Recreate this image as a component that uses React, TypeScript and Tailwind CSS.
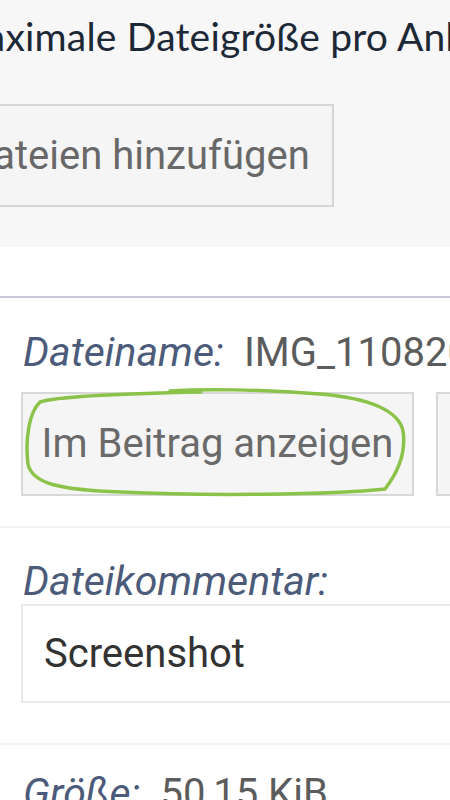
import React from "react";

function Scribble() {
  // hand-drawn green ring around the first action button
  return (
    <svg
      className="absolute left-0 top-0 pointer-events-none overflow-visible"
      width="393"
      height="104"
      viewBox="0 0 393 104"
      fill="none"
    >
      <path
        d="M 180 0 C 130 1, 40 3, 19 10 C 8 20, 4 48, 7 72 C 11 92, 40 98, 100 100 C 180 104, 310 103, 364 97 C 378 79, 385 59, 382 39 C 378 19, 349 6, 299 2 C 239 -3, 179 -3, 149 -1"
        stroke="#8bc34a"
        strokeWidth="3.5"
        strokeLinecap="round"
        strokeLinejoin="round"
      />
    </svg>
  );
}

export default function App() {
  return (
    <div className="w-[450px] h-[800px] overflow-hidden bg-white font-['Roboto',sans-serif]">
      {/* upload area */}
      <section className="h-[247px] bg-[#f7f7f7] pt-[12px] overflow-hidden">
        <p className="ml-[-50px] whitespace-nowrap font-['Lato',sans-serif] text-[39px] leading-[48px] tracking-[0.2px] text-[#1d2837]">
          Maximale Dateigröße pro Anhang: 2 MB
        </p>
        <button className="mt-[44px] ml-[-57px] h-[103px] border-2 border-[#d5d5d5] bg-[#f5f5f5] px-[22px] text-[40px] text-[#686868] whitespace-nowrap">
          Dateien hinzufügen
        </button>
      </section>

      <div className="h-[49px]" />
      <div className="h-[2px] bg-[#c8c8d6]" />

      {/* attachment entry */}
      <div className="pl-[21px] pt-[32px] pb-[30px] overflow-hidden">
        <div className="flex items-baseline whitespace-nowrap leading-[44px] pl-[2px]">
          <span className="italic text-[41px] text-[#4b5b79]">Dateiname:</span>
          <span className="ml-[20px] text-[40px] text-[#5c5c5c]">IMG_1108202412345.png</span>
        </div>
        <div className="mt-[17px] flex gap-[22px]">
          <div className="relative shrink-0">
            <button className="w-[393px] h-[104px] border-2 border-[#d8d8d8] bg-[#f5f5f5] text-[40px] text-[#6a6a6a] whitespace-nowrap">
              Im Beitrag anzeigen
            </button>
            <Scribble />
          </div>
          <button className="shrink-0 w-[260px] h-[104px] border-2 border-[#d8d8d8] bg-[#f5f5f5] text-[40px] text-[#6a6a6a] whitespace-nowrap">
            Löschen
          </button>
        </div>
      </div>

      <div className="h-[2px] bg-[#f3f3f3]" />

      <div className="pl-[21px] pt-[31px] pb-[40px] overflow-hidden">
        <div className="italic text-[41px] leading-[44px] text-[#4b5b79] pl-[2px]">Dateikommentar:</div>
        <div className="mt-[1px] w-[600px] h-[99px] border-2 border-[#e9e9e9] bg-white flex items-center pl-[21px] text-[40px] text-[#333333]">
          Screenshot
        </div>
      </div>

      <div className="h-[2px] bg-[#f3f3f3]" />

      <div className="flex items-baseline pl-[23px] pt-[26px] whitespace-nowrap leading-[44px]">
        <span className="italic text-[41px] text-[#4b5b79]">Größe:</span>
        <span className="ml-[20px] text-[40px] text-[#5c5c5c]">50,15 KiB</span>
      </div>
    </div>
  );
}
